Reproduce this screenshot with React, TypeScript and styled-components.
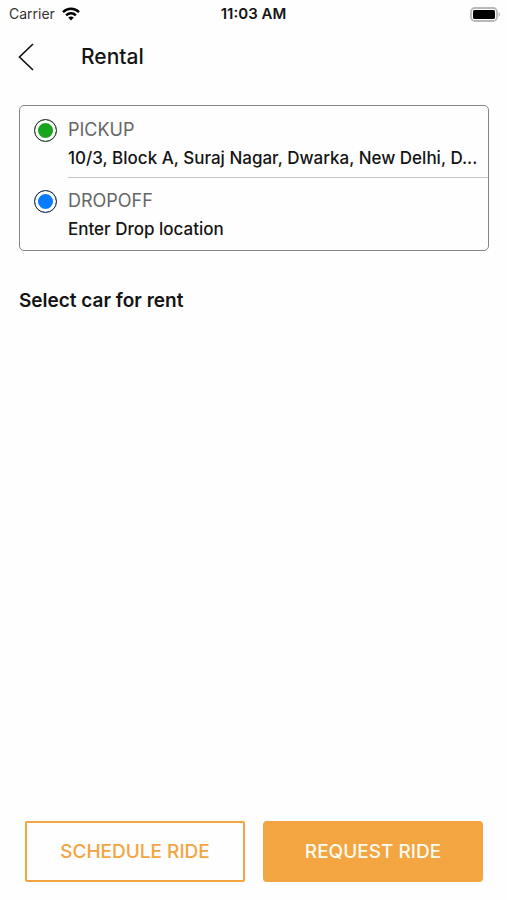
import React from "react";
import styled, { createGlobalStyle } from "styled-components";

const GlobalStyle = createGlobalStyle`
  *, *::before, *::after { box-sizing: border-box; }
  body {
    margin: 0;
    background: #fefefe;
    color: #141414;
    font-family: Inter, "Liberation Sans", sans-serif;
  }
  button { font: inherit; color: inherit; cursor: pointer; }
`;

const Screen = styled.div`
  min-height: 100vh;
  display: flex;
  flex-direction: column;
`;

const StatusBar = styled.div`
  height: 28px;
  padding: 0 6px;
  display: grid;
  grid-template-columns: 1fr auto 1fr;
  align-items: center;
  font-size: 14px;
  line-height: 28px;
`;

const Carrier = styled.div`
  padding-left: 3px;
  display: flex;
  align-items: center;
  gap: 7px;
  color: #333;
`;

const Clock = styled.time`
  font-size: 15px;
  font-weight: 600;
`;

const Battery = styled.div`
  display: flex;
  justify-content: flex-end;
`;

const Header = styled.header`
  height: 57px;
  padding: 0 16px;
  display: flex;
  align-items: center;
  gap: 45px;
`;

const BackButton = styled.button`
  width: 20px;
  height: 32px;
  padding: 0;
  border: 0;
  background: none;
  display: flex;
  align-items: center;
  justify-content: center;
`;

const Title = styled.h1`
  margin: 0;
  font-size: 21px;
  line-height: 29px;
  font-weight: 500;
`;

const Main = styled.main`
  flex: 1;
  padding: 20px 18px 20px 19px;
`;

const LocationCard = styled.section`
  padding: 1px 0;
  border: 1px solid #858585;
  border-radius: 5px;
`;

const LocationRow = styled.button`
  width: 100%;
  padding: 0 0 0 14px;
  border: 0;
  background: none;
  text-align: left;
  display: flex;
  gap: 11px;
`;

const Marker = styled.span<{ $color: string }>`
  flex: none;
  width: 23px;
  height: 23px;
  margin-top: 12px;
  border: 1px solid #2b2b2b;
  border-radius: 50%;
  background: ${(p) => p.$color};
  box-shadow: inset 0 0 0 3px #fefefe;
`;

const LocationText = styled.span<{ $divided?: boolean }>`
  flex: 1;
  min-width: 0;
  padding: 10px 6px 4px 0;
  border-bottom: 1px solid ${(p) => (p.$divided ? "#c4c4c4" : "transparent")};
  display: flex;
  flex-direction: column;
`;

const LocationLabel = styled.span`
  font-size: 18px;
  line-height: 26px;
  color: #666;
`;

const LocationValue = styled.span`
  font-size: 17px;
  line-height: 30px;
  font-weight: 500;
  white-space: nowrap;
  overflow: hidden;
  text-overflow: ellipsis;
`;

const SectionTitle = styled.h2`
  margin: 36px 0 0;
  font-size: 19px;
  line-height: 28px;
  font-weight: 600;
`;

const Footer = styled.footer`
  padding: 0 24px 18px 25px;
  display: grid;
  grid-template-columns: 1fr 1fr;
  gap: 18px;
`;

const ActionButton = styled.button<{ $filled?: boolean }>`
  height: 61px;
  padding: 0;
  border: 2px solid #f2a541;
  border-radius: ${(p) => (p.$filled ? 4 : 2)}px;
  background: ${(p) => (p.$filled ? "#f2a541" : "transparent")};
  color: ${(p) => (p.$filled ? "#fffaf0" : "#f2a541")};
  font-size: 19px;
  font-weight: 500;
  white-space: nowrap;
`;

const WifiIcon = () => (
  <svg width="18" height="14" viewBox="0 0 18 14" aria-hidden="true">
    <g fill="none" stroke="#000" strokeWidth="2.4">
      <path d="M1 5.1C5.5.6 12.5.6 17 5.1" />
      <path d="M4.1 8.3c2.8-2.7 7-2.7 9.8 0" />
    </g>
    <path d="M9 13.6 6.2 10.6c1.6-1.5 4-1.5 5.6 0Z" />
  </svg>
);

const BatteryIcon = () => (
  <svg width="31" height="15" viewBox="0 0 31 15" aria-hidden="true">
    <rect x="1" y="1" width="26" height="13" rx="4" fill="#fefefe" stroke="#b8b8b8" strokeWidth="1.8" />
    <rect x="3" y="3" width="22" height="9" rx="1.5" fill="#000" />
    <path d="M28.5 5.2c2 .7 2 3.9 0 4.6Z" fill="#b8b8b8" />
  </svg>
);

const BackIcon = () => (
  <svg width="16" height="28" viewBox="0 0 16 28" fill="none" stroke="#141414" strokeWidth="1.7" aria-hidden="true">
    <path d="M15 1 1.5 14 15 27" />
  </svg>
);

const locations = [
  { label: "PICKUP", value: "10/3, Block A, Suraj Nagar, Dwarka, New Delhi, D...", color: "#18a51b" },
  { label: "DROPOFF", value: "Enter Drop location", color: "#077bff" },
];

export default function App() {
  return (
    <>
      <GlobalStyle />
      <Screen>
        <StatusBar>
          <Carrier>
            Carrier
            <WifiIcon />
          </Carrier>
          <Clock>11:03 AM</Clock>
          <Battery>
            <BatteryIcon />
          </Battery>
        </StatusBar>
        <Header>
          <BackButton type="button" aria-label="Back">
            <BackIcon />
          </BackButton>
          <Title>Rental</Title>
        </Header>
        <Main>
          <LocationCard>
            {locations.map((location, index) => (
              <LocationRow type="button" key={location.label}>
                <Marker $color={location.color} />
                <LocationText $divided={index < locations.length - 1}>
                  <LocationLabel>{location.label}</LocationLabel>
                  <LocationValue>{location.value}</LocationValue>
                </LocationText>
              </LocationRow>
            ))}
          </LocationCard>
          <SectionTitle>Select car for rent</SectionTitle>
        </Main>
        <Footer>
          <ActionButton type="button">SCHEDULE RIDE</ActionButton>
          <ActionButton type="button" $filled>
            REQUEST RIDE
          </ActionButton>
        </Footer>
      </Screen>
    </>
  );
}
